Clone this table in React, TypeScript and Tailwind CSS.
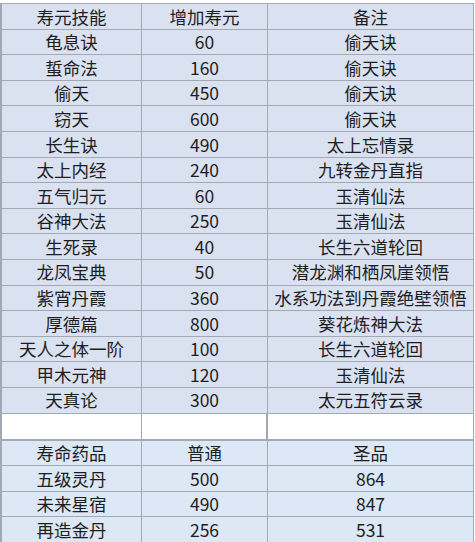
const skills: [string, string, string][] = [
  ["龟息诀", "60", "偷天诀"],
  ["蜇命法", "160", "偷天诀"],
  ["偷天", "450", "偷天诀"],
  ["窃天", "600", "偷天诀"],
  ["长生诀", "490", "太上忘情录"],
  ["太上内经", "240", "九转金丹直指"],
  ["五气归元", "60", "玉清仙法"],
  ["谷神大法", "250", "玉清仙法"],
  ["生死录", "40", "长生六道轮回"],
  ["龙凤宝典", "50", "潜龙渊和栖凤崖领悟"],
  ["紫宵丹霞", "360", "水系功法到丹霞绝壁领悟"],
  ["厚德篇", "800", "葵花炼神大法"],
  ["天人之体一阶", "100", "长生六道轮回"],
  ["甲木元神", "120", "玉清仙法"],
  ["天真论", "300", "太元五符云录"],
];

const pills: [string, string, string][] = [
  ["寿命药品", "普通", "圣品"],
  ["五级灵丹", "500", "864"],
  ["未来星宿", "490", "847"],
  ["再造金丹", "256", "531"],
];

function Row({ cells, bg, h }: { cells: string[]; bg: string; h: string }) {
  return (
    <div className={`grid grid-cols-[140px_126px_1fr] border-b border-[#a3a9b0] ${bg} ${h}`}>
      {cells.map((c, i) => (
        <div
          key={i}
          className={`flex items-center justify-center leading-none ${i < 2 ? "border-r border-[#a3a9b0]" : ""}`}
        >
          {c}
        </div>
      ))}
    </div>
  );
}

export default function App() {
  return (
    <div
      className="w-[475px] h-[542px] overflow-hidden bg-white pt-[3px] text-[17.5px] text-[#1e1e1e]"
      style={{ fontFamily: '"Noto Sans CJK SC", "Noto Sans", sans-serif' }}
    >
      <div className="w-[474px] border-l-2 border-r border-t border-[#a3a9b0]">
        <Row cells={["寿元技能", "增加寿元", "备注"]} bg="bg-[#dae1f1]" h="h-[25.6px]" />
        {skills.map((r, i) => (
          <Row key={i} cells={r} bg="bg-[#dae1f1]" h="h-[25.6px]" />
        ))}
        <div className="grid grid-cols-[140px_126px_1fr] h-[27px] bg-white border-b-2 border-[#a3a9b0]">
          <div className="border-r border-[#a3a9b0]" />
          <div className="border-r-2 border-[#a3a9b0]" />
          <div />
        </div>
        {pills.map((r, i) => (
          <Row key={i} cells={r} bg="bg-[#dce8f5]" h="h-[25.5px]" />
        ))}
      </div>
    </div>
  );
}
